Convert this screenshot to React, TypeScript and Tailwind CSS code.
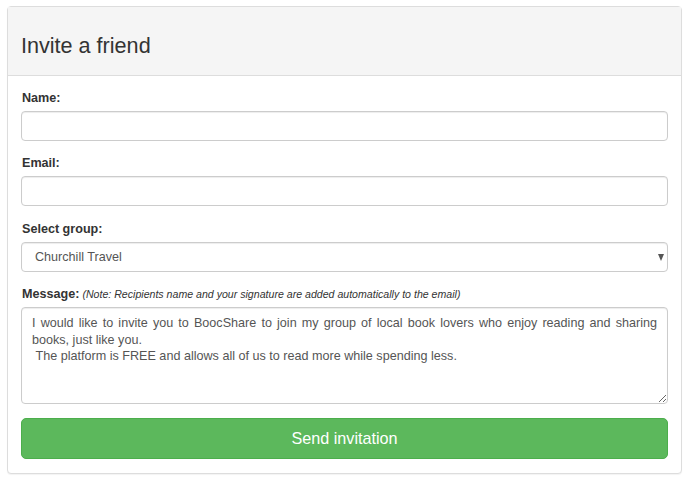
import React from "react";

const message =
  "I would like to invite you to BoocShare to join my group of local book lovers who enjoy reading and sharing books, just like you.\n The platform is FREE and allows all of us to read more while spending less.";

export default function App() {
  return (
    <div className="min-h-[477px] bg-white pl-[7px] pt-[6px] font-['Liberation_Sans',Arial,sans-serif] text-[#333]">
      <div className="w-[675px] rounded-[4px] border border-[#ddd] bg-white shadow-[0_1px_1px_rgba(0,0,0,0.05)]">
        <div className="flex h-[69px] items-center border-b border-[#ddd] bg-[#f5f5f5] px-[13px] pt-[9px]">
          <h3 className="text-[21.6px] leading-none font-normal text-[#333]">Invite a friend</h3>
        </div>
        <form className="flex flex-col px-[13px] pt-[14px] pb-[14px]">
          <label className="mb-[5px] pl-px text-[12.6px] leading-4 font-bold">Name:</label>
          <input
            type="text"
            className="mb-[14px] h-[30px] rounded-[4px] border border-[#ccc] px-3 text-[12.6px] text-[#555] shadow-[inset_0_1px_1px_rgba(0,0,0,0.075)] outline-none"
          />
          <label className="mb-[5px] pl-px text-[12.6px] leading-4 font-bold">Email:</label>
          <input
            type="email"
            className="mb-[15px] h-[30px] rounded-[4px] border border-[#ccc] px-3 text-[12.6px] text-[#555] shadow-[inset_0_1px_1px_rgba(0,0,0,0.075)] outline-none"
          />
          <label className="mb-[5px] pl-px text-[12.6px] leading-4 font-bold">Select group:</label>
          <div className="relative mb-[14px]">
            <select className="h-[30px] w-full appearance-none rounded-[4px] border border-[#ccc] bg-white pl-[13px] text-[12.6px] text-[#555] shadow-[inset_0_1px_1px_rgba(0,0,0,0.075)] outline-none">
              <option>Churchill Travel</option>
            </select>
            <span className="pointer-events-none absolute top-[12px] right-[4px] h-0 w-0 border-x-[3.5px] border-t-[7px] border-x-transparent border-t-[#555]" />
          </div>
          <div className="mb-[5px] flex items-baseline gap-[3px] pl-px leading-4">
            <span className="text-[12.6px] font-bold">Message:</span>
            <span className="text-[10.6px] italic">
              (Note: Recipients name and your signature are added automatically to the email)
            </span>
          </div>
          <textarea
            defaultValue={message}
            className="mb-[14px] h-[97px] rounded-[4px] border border-[#ccc] px-[10px] py-[7px] text-justify text-[12.6px] leading-[16.5px] text-[#555] shadow-[inset_0_1px_1px_rgba(0,0,0,0.075)] outline-none"
          />
          <button
            type="button"
            className="h-[41px] rounded-[5px] border border-[#4cae4c] bg-[#5cb85c] text-[16.2px] text-white"
          >
            Send invitation
          </button>
        </form>
      </div>
    </div>
  );
}
